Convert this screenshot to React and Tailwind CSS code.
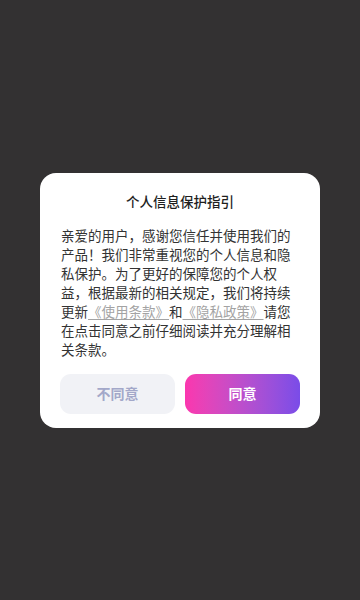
export default function App() {
  const font = { fontFamily: '"Noto Sans CJK SC", "Noto Sans", sans-serif' };
  return (
    <div
      className="w-[360px] h-[600px] bg-[#333132] flex items-center justify-center"
      style={font}
    >
      <div className="w-[280px] bg-white rounded-[16px] pt-[18px] pb-[14px] px-[20px] flex flex-col">
        <div className="text-center text-[13.5px] leading-[20px] font-medium text-[#1f1f1f]">
          个人信息保护指引
        </div>
        <p className="mt-[15.5px] pl-[1px] text-[13.5px] leading-[19px] text-[#333333]">
          亲爱的用户，感谢您信任并使用我们的产品！我们非常重视您的个人信息和隐私保护。为了更好的保障您的个人权益，根据最新的相关规定，我们将持续更新
          <span className="text-[#a3a3a3] underline underline-offset-2">《使用条款》</span>
          和
          <span className="text-[#a3a3a3] underline underline-offset-2">《隐私政策》</span>
          请您在点击同意之前仔细阅读并充分理解相关条款。
        </p>
        <div className="mt-[14.5px] flex gap-[10px]">
          <button className="flex-1 h-[40px] rounded-[11px] bg-[#f1f2f6] text-[#a3a8c9] text-[14px] font-bold flex items-center justify-center">
            不同意
          </button>
          <button className="flex-1 h-[40px] rounded-[11px] bg-gradient-to-r from-[#fb36ae] to-[#7a4ce8] text-white text-[14px] font-bold flex items-center justify-center">
            同意
          </button>
        </div>
      </div>
    </div>
  );
}
